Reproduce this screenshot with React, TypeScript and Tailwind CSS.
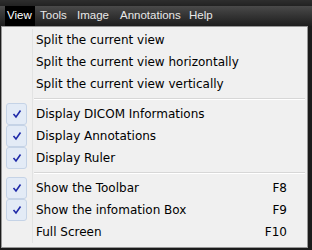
import React from "react";

type Item = { label: string; checked?: boolean; shortcut?: string } | "sep";

const items: Item[] = [
  { label: "Split the current view" },
  { label: "Split the current view horizontally" },
  { label: "Split the current view vertically" },
  "sep",
  { label: "Display DICOM Informations", checked: true },
  { label: "Display Annotations", checked: true },
  { label: "Display Ruler", checked: true },
  "sep",
  { label: "Show the Toolbar", checked: true, shortcut: "F8" },
  { label: "Show the infomation Box", checked: true, shortcut: "F9" },
  { label: "Full Screen", shortcut: "F10" },
];

const Check: React.FC = () => (
  <div className="w-[21px] h-[22px] rounded-[3px] border border-[#c5d3e6] bg-[#e3ebf6] flex items-center justify-center">
    <svg width="10" height="10" viewBox="0 0 10 10">
      <path d="M1.5 5 L4 8 L8.5 1.5" fill="none" stroke="#1f2aa8" strokeWidth="1.6" />
    </svg>
  </div>
);

const App: React.FC = () => {
  return (
    <div
      className="w-[312px] h-[250px] bg-[#1b1b1b] overflow-hidden"
      style={{ fontFamily: "'Liberation Sans', sans-serif" }}
    >
      {/* Menu bar */}
      <div className="h-[6px] bg-gradient-to-b from-[#2e2e2e] to-[#222]" />
      <div className="h-[20px] flex items-stretch bg-gradient-to-b from-[#4a4a4a] via-[#333] to-[#1e1e1e] text-[#e8e8e8] text-[11.5px]">
        <div className="ml-[5px] pl-[2px] w-[30px] bg-black text-white flex items-center">View</div>
        <div className="ml-[5px] w-[37px] flex items-center">Tools</div>
        <div className="w-[43px] flex items-center">Image</div>
        <div className="w-[69px] flex items-center">Annotations</div>
        <div className="flex items-center">Help</div>
      </div>

      {/* Dropdown */}
      <div
        className="ml-[1px] w-[307px] h-[222px] bg-[#f0f0f0] border border-[#979797] p-[2px] text-black text-[12px]"
        style={{ fontFamily: "'DejaVu Sans', sans-serif" }}
      >
        <div className="relative">
          <div className="absolute left-[28px] top-0 bottom-0 w-[2px] border-l border-[#e2e3e3]" />
          {items.map((it, i) =>
            it === "sep" ? (
              <div key={i} className="h-[8px] flex items-center pl-[30px]">
                <div className="w-full border-t border-[#d7d7d7] border-b border-b-white" />
              </div>
            ) : (
              <div key={i} className="h-[22px] flex items-center">
                <div className="w-[32px] pl-[2px] flex items-center">{it.checked && <Check />}</div>
                <div className="flex-1">{it.label}</div>
                {it.shortcut && <div className="pr-[18px]">{it.shortcut}</div>}
              </div>
            )
          )}
        </div>
      </div>
    </div>
  );
};

export default App;
